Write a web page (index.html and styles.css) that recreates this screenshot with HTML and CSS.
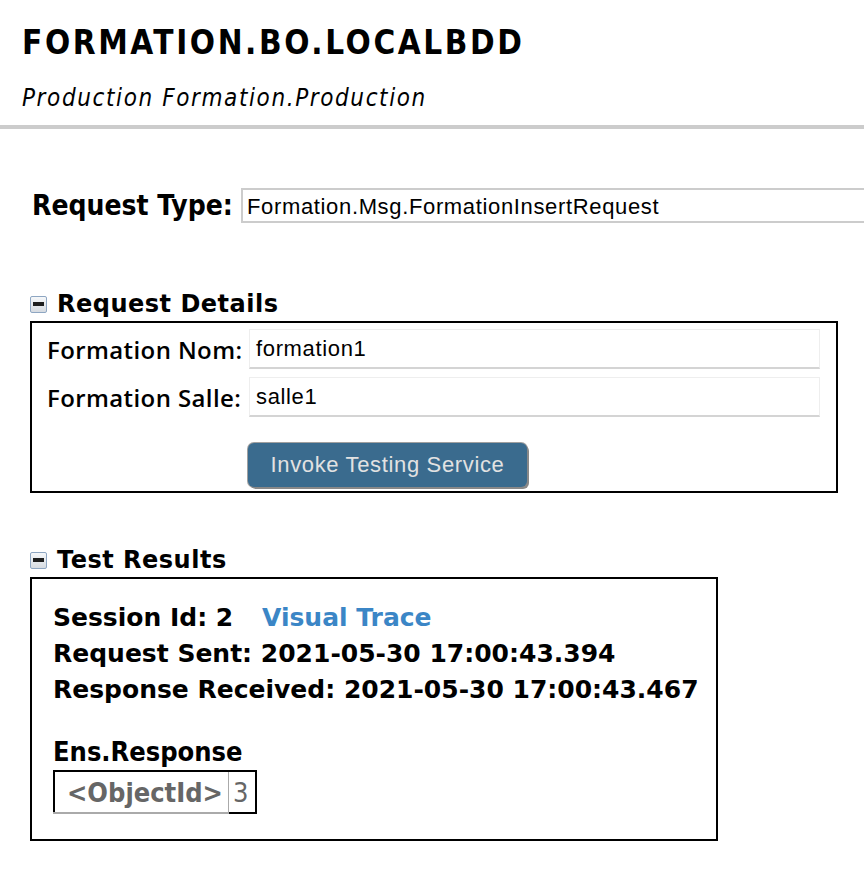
FILE: index.html
```html
<!DOCTYPE html>
<html>
<head>
<meta charset="utf-8">
<link rel="stylesheet" href="styles.css">
</head>
<body>
<header class="page-header">
  <h1 class="title">FORMATION.BO.LOCALBDD</h1>
  <div class="subtitle">Production Formation.Production</div>
</header>
<main class="content">
  <div class="req-type">
    <span class="req-type-label">Request Type:</span>
    <div class="req-type-input">Formation.Msg.FormationInsertRequest</div>
  </div>

  <section class="section details">
    <h2 class="section-title"><span class="toggle"><span class="toggle-bar"></span></span>Request Details</h2>
    <div class="box details-box">
      <div class="form-grid">
        <label class="field-label">Formation Nom:</label>
        <div class="field-input">formation1</div>
        <label class="field-label">Formation Salle:</label>
        <div class="field-input">salle1</div>
        <div class="btn-cell"><button class="invoke-btn">Invoke Testing Service</button></div>
      </div>
    </div>
  </section>

  <section class="section results">
    <h2 class="section-title"><span class="toggle"><span class="toggle-bar"></span></span>Test Results</h2>
    <div class="box results-box">
      <div class="res-line">Session Id: 2 <a class="trace-link">Visual Trace</a></div>
      <div class="res-line">Request Sent: 2021-05-30 17:00:43.394</div>
      <div class="res-line">Response Received: 2021-05-30 17:00:43.467</div>
      <div class="ens-title">Ens.Response</div>
      <table class="obj-table">
        <tr><td class="obj-key">&lt;ObjectId&gt;</td><td class="obj-val">3</td></tr>
      </table>
    </div>
  </section>
</main>
</body>
</html>
```

FILE: styles.css
```css
html, body { margin: 0; padding: 0; background: #fff; color: #000; }
body { font-family: "DejaVu Sans", sans-serif; }

.page-header {
  padding: 22px 0 12px 22px;
  border-bottom: 4px solid #cccccc;
}
.title {
  margin: 0;
  font-family: "DejaVu Sans Condensed", "DejaVu Sans", sans-serif;
  font-weight: 700;
  font-size: 33px;
  line-height: 41px;
  letter-spacing: 2.6px;
}
.subtitle {
  margin-top: 21px;
  font-family: "DejaVu Sans Condensed", "DejaVu Sans", sans-serif;
  font-style: italic;
  font-size: 24px;
  line-height: 29px;
  letter-spacing: 1.6px;
}

.content { padding: 59px 0 0 30px; }

.req-type { display: flex; align-items: center; }
.req-type-label {
  font-family: "DejaVu Sans Condensed", "DejaVu Sans", sans-serif;
  font-weight: 700;
  font-size: 28px;
  padding-left: 2px;
  width: 209px;
}
.req-type-input {
  flex: 1;
  height: 31px;
  border: 2px solid #cccccc;
  border-right: none;
  font-family: "Liberation Sans", sans-serif;
  font-size: 22px;
  letter-spacing: 0.65px;
  line-height: 33px;
  padding-left: 4px;
}

.section { margin-top: 66px; }
.results { margin-top: 52px; }
.section-title {
  margin: 0 0 2px 0;
  display: flex;
  align-items: center;
  font-family: "DejaVu Sans", sans-serif;
  font-weight: 700;
  font-size: 24px;
  letter-spacing: 0.5px;
  line-height: 30px;
}
.toggle {
  box-sizing: border-box;
  width: 17px; height: 17px;
  border: 1px solid #8ea6c2;
  border-radius: 2px;
  background: linear-gradient(#f6f8fa, #d6dbe1);
  margin-right: 10px;
  display: flex; align-items: center; justify-content: center;
}
.toggle-bar { width: 11px; height: 4px; background: #1e1e1e; }

.box { border: 2px solid #000; }
.details-box { width: 804px; padding: 6px 0 4px 0; }
.form-grid {
  display: grid;
  grid-template-columns: 217px 571px;
  row-gap: 8px;
  align-items: center;
}
.field-label {
  padding-left: 15px;
  font-family: "Open Sans", sans-serif;
  font-weight: 600;
  font-size: 24px;
  letter-spacing: 0.4px;
  white-space: nowrap;
}
.field-input {
  height: 37px;
  border: 1px solid #eeeeee;
  border-bottom: 2px solid #d4d4d4;
  font-family: "Liberation Sans", sans-serif;
  font-size: 22px;
  letter-spacing: 0.65px;
  line-height: 37px;
  padding-left: 6px;
}
.btn-cell { grid-column: 2; padding-top: 18px; }
.invoke-btn {
  margin-left: -1px;
  width: 279px;
  height: 44px;
  background: #3a6b8e;
  color: #e2e2e2;
  border: none;
  border-radius: 6px;
  box-shadow: 2px 2px 0 #888888, 0 0 0 1px #a0a0a0;
  font-family: "Liberation Sans", sans-serif;
  font-size: 22px;
  letter-spacing: 0.65px;
  padding: 0;
}

.results-box { width: 663px; padding: 21px 0 25px 21px; }
.res-line {
  font-family: "DejaVu Sans", sans-serif;
  font-weight: 700;
  font-size: 25px;
  line-height: 36px;
}
.trace-link { color: #3b86c6; margin-left: 20px; }
.ens-title {
  margin-top: 29px;
  font-family: "DejaVu Sans Condensed", "DejaVu Sans", sans-serif;
  font-weight: 700;
  font-size: 27px;
  line-height: 30px;
}
.obj-table {
  border: 2px solid #000;
  border-collapse: collapse;
  margin-top: 3px;
}
.obj-table td {
  padding: 6px 4px 4px 4px;
  font-family: "DejaVu Sans Condensed", "DejaVu Sans", sans-serif;
  font-weight: 700;
  font-size: 27px;
  line-height: 30px;
  color: #666;
}
.obj-key {
  border-right: 1px solid #aaa;
  border-bottom: 2px solid #aaa;
  padding-left: 12px !important;
  padding-right: 5px !important;
}
.obj-val { font-weight: 400 !important; padding-right: 7px !important; }
```
